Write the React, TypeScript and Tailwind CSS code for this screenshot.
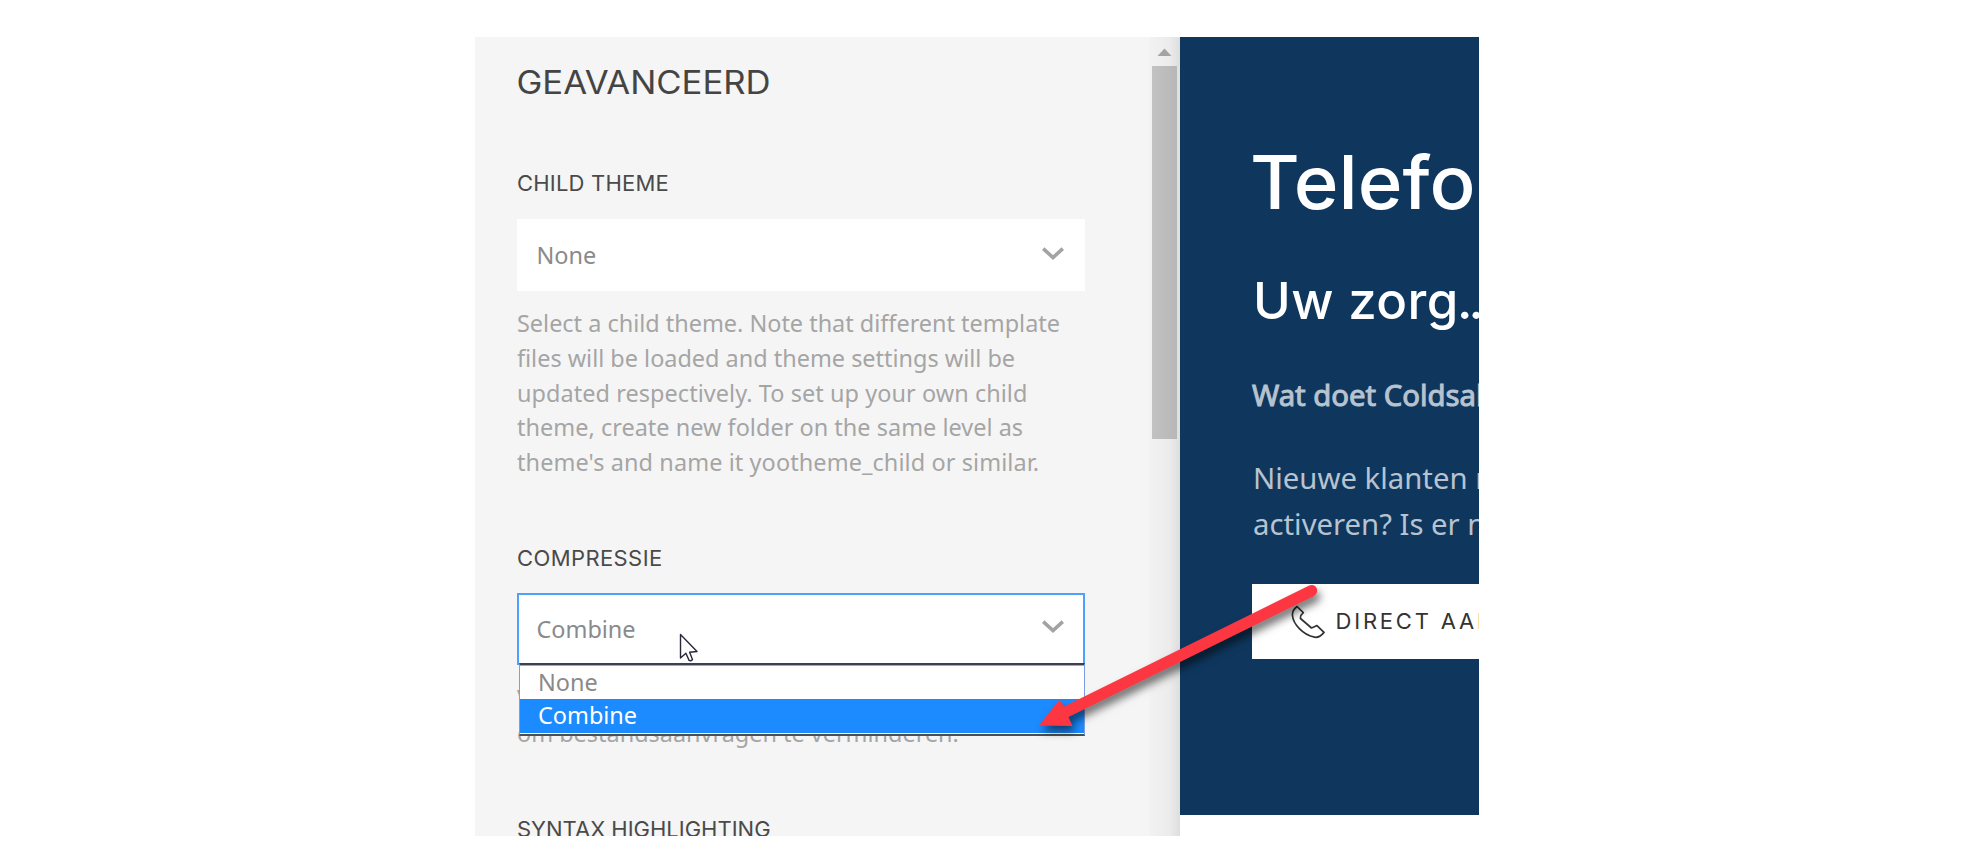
import type { ReactNode } from "react";

function Label({ children, className = "" }: { children: ReactNode; className?: string }) {
  return (
    <h2 className={`h-7 shrink-0 whitespace-nowrap font-[Inter,sans-serif] text-[22px] leading-7 text-[#4a4a4a] ${className}`}>
      {children}
    </h2>
  );
}

function Select({ value, open = false }: { value: string; open?: boolean }) {
  return (
    <div
      className={`flex h-[72px] w-[568px] shrink-0 items-center justify-between border-2 bg-white pr-[19.5px] pl-[17.5px] text-[#8a8a8a] ${
        open ? "border-[#4da0fb]" : "border-white"
      }`}
    >
      <span>{value}</span>
      <svg width="22" height="14" viewBox="0 0 22 14" className="-mt-[3px]" fill="none" stroke="#a3a3a3" strokeWidth="3.6">
        <path d="M1.2 1.6 11 10.6 20.8 1.6" />
      </svg>
    </div>
  );
}

function Settings() {
  return (
    <section className="flex h-full w-[674px] flex-col bg-[#f5f5f5] pt-[26px] pl-[42px] text-[23.45px] leading-[34.8px]">
      <h1 className="h-10 shrink-0 origin-left -translate-x-[0.5px] scale-x-[1.083] font-[Inter,sans-serif] text-[32px] leading-10 text-[#444]">
        GEAVANCEERD
      </h1>

      <Label className="mt-[66px] mb-[22px] tracking-[0.2px]">CHILD THEME</Label>
      <Select value="None" />
      <p className="mt-[15px] shrink-0 whitespace-nowrap text-[#a5a5a5]">
        Select a child theme. Note that different template
        <br />
        files will be loaded and theme settings will be
        <br />
        <span className="tracking-[0.07px]">updated respectively. To set up your own child</span>
        <br />
        <span className="tracking-[0.03px]">theme, create new folder on the same level as</span>
        <br />
        <span className="tracking-[0.1px]">theme's and name it yootheme_child or similar.</span>
      </p>

      <Label className="mt-[64px] mb-[21px] tracking-[0.4px]">COMPRESSIE</Label>
      <div className="relative shrink-0">
        <Select value="Combine" open />
        <ul className="absolute top-[70px] left-[2px] z-10 h-[73px] w-[566px] border-x border-t-2 border-b-2 border-x-[#7d9fe0] border-t-[#3b4053] border-b-[#4b504f] bg-white">
          <li className="h-[34px] border-t border-[#8eabe8] pl-[18px] leading-[32px] text-[#8a8a8a]">None</li>
          <li className="h-[34px] bg-[#1c8bff] pl-[18px] leading-[32px] text-white">Combine</li>
        </ul>
        <svg width="20" height="30" viewBox="0 0 20 30" className="absolute top-[40px] left-[162px] z-20">
          <path d="M1.5 1.5V25l5.4-4.8 3.2 7.2q1.8 1 3.4-.9L10.6 19.2l7.4-.7Z" fill="#fff" stroke="#29283a" strokeWidth="1.4" strokeLinejoin="round" />
        </svg>
      </div>
      <p className="mt-[16px] shrink-0 whitespace-nowrap text-[#a5a5a5]">
        Voeg bestanden samen en comprimeer ze
        <br />
        om bestandsaanvragen te verminderen.
      </p>

      <Label className="mt-[64.5px]">SYNTAX HIGHLIGHTING</Label>
    </section>
  );
}

function Scrollbar() {
  return (
    <div className="flex h-full w-[31px] flex-col items-start bg-linear-to-r from-[#f2f2f2] via-[#ececec] via-65% to-[#dedede] pl-[3px]">
      <svg width="25" height="29" viewBox="0 0 25 29" fill="#a3a3a3">
        <path d="M12.5 11.5 19.5 19H5.5Z" />
      </svg>
      <div className="h-[373px] w-[25px] bg-linear-to-r from-[#c2c2c2] to-[#b7b7b7]" />
    </div>
  );
}

function Preview() {
  return (
    <section className="h-[778px] w-[299px] overflow-hidden bg-[#0f375e] pt-[99px] pl-[72px] whitespace-nowrap">
      <h1 className="h-[90px] origin-left -translate-x-[2px] scale-x-[1.03] font-[Inter,sans-serif] text-[74px] leading-[92px] font-medium text-white">
        Telefo
      </h1>
      <h2 className="mt-[43px] h-[64px] pl-px font-[Inter,sans-serif] text-[51px] leading-[64px] font-[450] tracking-[0.5px] text-white">
        Uw zorg<span className="-ml-[2px] tracking-[-4px]">...</span>
      </h2>
      <p className="mt-[38.5px] text-[29.3px] leading-[46.5px] text-[#b7c3cf] [-webkit-text-stroke:1px_#b7c3cf]">Wat doet Coldsales</p>
      <p className="mt-[36.5px] pl-px text-[29.3px] leading-[46.5px] text-[#b7c3cf]">
        Nieuwe klanten nodig
        <br />
        activeren? Is er nog
      </p>
      <button className="mt-[36.5px] flex h-[74.5px] w-[360px] items-center bg-white pl-[39px] font-[Inter,sans-serif] text-[22px] tracking-[2.8px] text-[#333]">
        <svg width="34" height="34" viewBox="0 0 34 34" fill="none" stroke="#333" strokeWidth="1.7" strokeLinejoin="round" className="mt-[2px] mr-[10.5px]">
          <path d="M6 1.5 12.3 7.6Q9 10.5 9.5 13.5L20.5 23Q23.5 22 26 20.6L33 27.4C30.5 30.5 27 32.8 23.5 32.2 12 30 2 19 1.4 10 1.3 6.5 3.5 3.5 6 1.5Z" />
        </svg>
        DIRECT AANVRAGEN
      </button>
    </section>
  );
}

function Arrow() {
  return (
    <svg width="310" height="170" viewBox="0 0 310 170" className="pointer-events-none absolute top-[538px] left-[554px] z-30">
      <g fill="#fd3742" className="[filter:drop-shadow(3px_6px_4px_rgb(0_0_0/0.55))]">
        <path d="M10 150.5 30.5 124.5 35 131.5 280.2 10.5Q286 8.8 288 14 288.8 19 284.6 21.2L39.5 142 43.5 151Z" />
      </g>
    </svg>
  );
}

export default function App() {
  return (
    <main className="flex h-[868px] w-[1972px] bg-white pt-[37px] pl-[475px] font-['Noto_Sans',sans-serif]">
      <div className="relative flex h-[799px] w-[1004px] overflow-hidden">
        <Settings />
        <Scrollbar />
        <Preview />
        <Arrow />
      </div>
    </main>
  );
}
